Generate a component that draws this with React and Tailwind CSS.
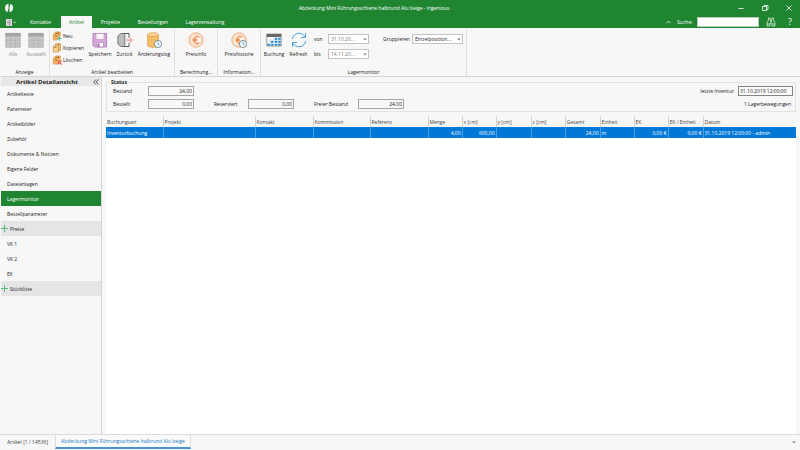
import React, { useState } from "react";

const menuTabs = [
  { name: "Kontakte", width: "w-[41px]" },
  { name: "Artikel", width: "w-[31px]" },
  { name: "Projekte", width: "w-[37px]" },
  { name: "Bestellungen", width: "w-12" },
  { name: "Lagerverwaltung", width: "w-14" },
];

const sections = [
  { name: "Artikeltexte" },
  { name: "Parameter" },
  { name: "Artikelbilder" },
  { name: "Zubehör" },
  { name: "Dokumente & Notizen" },
  { name: "Eigene Felder" },
  { name: "Dateianlagen" },
  { name: "Lagermonitor" },
  { name: "Bestellparameter" },
  { name: "Preise", group: true },
  { name: "VK 1" },
  { name: "VK 2" },
  { name: "EK" },
  { name: "Stückliste", group: true },
];

const columns = [
  { name: "Buchungsart", width: "w-[57px]", value: "Inventurbuchung" },
  { name: "Projekt", width: "w-[92px]", value: "" },
  { name: "Kontakt", width: "w-[58px]", value: "" },
  { name: "Kommission", width: "w-[57px]", value: "" },
  { name: "Referenz", width: "w-[58px]", value: "" },
  { name: "Menge", width: "w-[34px]", value: "4,00", right: true },
  { name: "x [cm]", width: "w-[34px]", value: "600,00", right: true },
  { name: "y [cm]", width: "w-[35px]", value: "" },
  { name: "z [cm]", width: "w-[34px]", value: "" },
  { name: "Gesamt", width: "w-[35px]", value: "24,00", right: true },
  { name: "Einheit", width: "w-[34px]", value: "m" },
  { name: "EK", width: "w-[34px]", value: "0,00 €", right: true },
  { name: "EK / Einheit", width: "w-[35px]", value: "0,00 €", right: true },
  { name: "Datum", width: "w-auto", value: "31.10.2019 12:00:00 - admin" },
];

const LogoIcon = () => (
  <svg viewBox="0 0 10 10" className="size-2.5">
    <path d="M4.500 .8C2 1 1 3 1 5s.8 3.500 2.300 4.200L4.500 6Z" fill="#f3faf4" />
    <path d="M5.500 9.200C8 9 9 7 9 5s-.8-3.500-2.300-4.200L5.500 4Z" fill="#f3faf4" />
  </svg>
);

const GridIcon = () => (
  <svg viewBox="0 0 16 16" className="size-4">
    <path d="M.5 1h15v14.500H.5z" fill="#c6c6c6" />
    <path d="M.5 1h15v3.500H.5z" fill="#a5a5a5" />
    <path
      d="M.5 4.500h15M.5 8.200h15M.5 11.900h15M5.500 4.500v11M10.500 4.500v11"
      stroke="#b3b3b3"
      strokeWidth=".7"
    />
    <path d="M.8 1.300h14.400v13.900H.8z" fill="none" stroke="#aaa" strokeWidth=".6" />
  </svg>
);

const SaveIcon = () => (
  <svg viewBox="0 0 16 16" className="size-4">
    <path d="M1 1.500h13.500V15H2.500L1 13.500z" fill="#d8aadb" stroke="#b07bb5" strokeWidth=".9" />
    <path d="M4 1.500h8v6H4z" fill="#faf6fa" stroke="#b98abd" strokeWidth=".6" />
    <path d="M4.500 10.500h7V15h-7z" fill="#fff" stroke="#b07bb5" strokeWidth=".6" />
    <path d="M5.500 11.500h2V15h-2z" fill="#a46aaa" />
  </svg>
);

const BackIcon = () => (
  <svg viewBox="0 0 16 16" className="size-4">
    <path d="M6 1.500h6v4M12 11v3.500H6" fill="none" stroke="#454545" strokeWidth=".9" />
    <path d="M.8 4l3-2.500h4v13h-4L.8 12z" fill="#bcbcbc" stroke="#666" strokeWidth=".8" />
    <path d="M9 8h6M12.700 5.500L15.200 8l-2.500 2.500" fill="none" stroke="#e8706a" strokeWidth=".9" />
  </svg>
);

const Clock = () => (
  <>
    <circle cx="12" cy="12" r="3.600" fill="#f5fafc" stroke="#526777" strokeWidth=".7" />
    <path d="M12 9.800v2.400l1.600.9" fill="none" stroke="#287eb5" strokeWidth=".7" />
  </>
);

const LogIcon = () => (
  <svg viewBox="0 0 16 16" className="size-4">
    <path
      d="M1.500 2.500v10.800C1.500 16 12.500 16 12.500 13.300V2.500"
      fill="#f5bd68"
      stroke="#d99738"
      strokeWidth=".6"
    />
    <ellipse cx="7" cy="2.600" rx="5.500" ry="1.900" fill="#fbd99f" stroke="#d99738" strokeWidth=".7" />
    <Clock />
  </svg>
);

const EuroIcon = ({ clock }) => (
  <svg viewBox="0 0 16 16" className="size-4">
    <circle cx="8" cy="8" r="7.200" fill="#fff1e5" stroke="#f09a5d" strokeWidth=".8" />
    <circle cx="8" cy="8" r="5.600" fill="none" stroke="#f4b386" strokeWidth=".6" />
    <path
      d="M11 5.200C8.500 3.500 6 5 6 8s2.500 4.500 5 2.800M4.500 7.200H9M4.500 8.800H9"
      fill="none"
      stroke="#ed8039"
      strokeWidth="1.100"
    />
    {clock && <Clock />}
  </svg>
);

const BookingIcon = () => (
  <svg viewBox="0 0 16 16" className="size-4">
    <path d="M.8 2h14.400v12H.8z" fill="#fff" stroke="#777" strokeWidth=".7" />
    <path d="M.8 2h14.400v3H.8z" fill="#666" />
    <path d="M.8 8h14.400M.8 11h14.400M4.400 5v9M8 5v9M11.600 5v9" stroke="#b6cad9" strokeWidth=".5" />
    <path
      d="M9 6h2v1.500H9zM12.400 6h2v1.500h-2zM5.200 9h2v1.500h-2zM9 9h2v1.500H9zM12.400 9h2v1.500h-2zM1.600 12h2v1.500h-2zM5.200 12h2v1.500h-2zM9 12h2v1.500H9zM12.400 12h2v1.500h-2z"
      fill="#2384c9"
      stroke="#2384c9"
      strokeWidth=".4"
    />
  </svg>
);

const RefreshIcon = () => (
  <svg viewBox="0 0 16 16" className="size-4">
    <path
      d="M1.300 7A6.800 6.800 0 0 1 14 4.800M14.700 9A6.800 6.800 0 0 1 2 11.200M14.500 1v4.500H10M1.500 15v-4.500H6"
      fill="none"
      stroke="#4ba3d8"
      strokeWidth="1"
    />
  </svg>
);

const SmallIcon = ({ kind }) => (
  <svg viewBox="0 0 10 10" className="size-2.5 shrink-0">
    {kind === "copy" ? (
      <>
        <path d="M3.500 .8h5v6.700h-5z" fill="#f6c473" stroke="#c98a3a" strokeWidth=".7" />
        <path d="M1.200 3h5.300v6H1.200z" fill="#fbd594" stroke="#c98a3a" strokeWidth=".7" />
        <path d="M6 1.500h1.500M2.500 4.500h2" stroke="#7a5a35" strokeWidth=".7" />
      </>
    ) : (
      <>
        <path d="M1.300 3.500L3.500 1h4.700v4L5 9H1.300z" fill="#f5b55f" stroke="#d08f3f" strokeWidth=".7" />
        <path d="M3.500 2.500h2M6.500 1.500v2M3 5h2" stroke="#765026" strokeWidth=".8" />
      </>
    )}
    {kind === "new" && <path d="M7.300 5.200v4.500M5 7.500h4.600" stroke="#4dc08a" strokeWidth="1.100" />}
    {kind === "delete" && <path d="M5.500 5.500l4 4m0-4l-4 4" stroke="#e9564c" strokeWidth="1.100" />}
  </svg>
);

const BinocularsIcon = () => (
  <svg viewBox="0 0 10 10" className="size-2.5">
    <path
      d="M2.500 1h1.700v2.500h1.600V1h1.700v2L9 5.500V9H6V6H4v3H1V5.500L2.500 3z"
      fill="none"
      stroke="#d9efdc"
      strokeWidth=".8"
    />
    <path d="M1 7h3M6 7h3M4 4.500h2" stroke="#d9efdc" strokeWidth=".7" />
  </svg>
);

const Arrow = () => (
  <svg viewBox="0 0 4 3" className="h-[3px] w-1">
    <path d="M0 .5h4L2 2.500z" fill="#888" />
  </svg>
);

const RibbonGroup = ({ title, className, children }) => (
  <section className={`flex flex-col border-r border-[#dedede] ${className}`}>
    <div className="flex flex-1 justify-center">{children}</div>
    <h2 className="truncate text-center leading-2">{title}</h2>
  </section>
);

const RibbonButton = ({ label, className, disabled, children }) => (
  <button
    type="button"
    disabled={disabled}
    className={`flex flex-col items-center gap-[2px] pt-[2px] whitespace-nowrap disabled:text-[#8a8a8a] ${className}`}
  >
    {children}
    <span className="leading-2">{label}</span>
  </button>
);

const SmallButton = ({ label, kind }) => (
  <button type="button" className="flex h-3 items-center gap-px whitespace-nowrap">
    <SmallIcon kind={kind} />
    {label}
  </button>
);

const Dropdown = ({ id, value, className, muted }) => (
  <div className={`relative ${className}`}>
    <select
      id={id}
      className={`block h-2.5 w-full appearance-none truncate border border-[#c3c3c3] bg-white pr-[7px] pl-[2px] leading-2 ${
        muted ? "text-[#777]" : "text-[#222]"
      }`}
    >
      <option>{value}</option>
    </select>
    <span className="pointer-events-none absolute inset-y-0 right-[2px] flex items-center">
      <Arrow />
    </span>
  </div>
);

const StockField = ({ id, label, value, labelWidth }) => (
  <div className="flex items-center">
    <label htmlFor={id} className={`shrink-0 ${labelWidth}`}>
      {label}
    </label>
    <input
      id={id}
      readOnly
      value={value}
      className="h-2.5 w-[46px] border border-[#a5a5a5] bg-[#f8f8f8] px-px text-right"
    />
  </div>
);

const TitleBar = () => (
  <div className="grid h-4 grid-cols-[1fr_auto_1fr] items-center">
    <div className="pl-1">
      <LogoIcon />
    </div>
    <h1 className="pr-[52px]">Abdeckung Mini Führungsschiene halbrund Alu beige - ingenious</h1>
    <div className="flex justify-end gap-4 pr-[7px]">
      <button type="button" aria-label="Minimieren">
        <svg viewBox="0 0 8 8" className="size-2">
          <path d="M1.500 4.500h5" stroke="#fff" strokeWidth=".8" />
        </svg>
      </button>
      <button type="button" aria-label="Wiederherstellen">
        <svg viewBox="0 0 8 8" className="size-2">
          <path d="M1.500 2.500h4v4h-4zM3 2.500v-1h4v4H5.500" fill="none" stroke="#fff" strokeWidth=".8" />
        </svg>
      </button>
      <button type="button" aria-label="Schließen">
        <svg viewBox="0 0 8 8" className="size-2">
          <path d="M1.500 1.500l5 5m0-5l-5 5" stroke="#fff" strokeWidth=".8" />
        </svg>
      </button>
    </div>
  </div>
);

const MenuBar = () => {
  const [active, setActive] = useState("Artikel");

  return (
    <div className="flex h-3 items-center">
      <button type="button" aria-label="Menü" className="flex w-5 items-center gap-px pl-1.5">
        <svg viewBox="0 0 6 7" className="h-[7px] w-1.5">
          <path d="M0 0h6v7H0z" fill="#e1d9e2" />
          <path d="M1 2h4M1 3.500h4M1 5h4M3.500 0v7" stroke="#8e7892" strokeWidth=".5" />
        </svg>
        <svg viewBox="0 0 4 3" className="h-[3px] w-[3px]">
          <path d="M0 .5h4L2 2.500z" fill="#c7e2ca" />
        </svg>
      </button>
      <nav className="flex h-full items-center">
        {menuTabs.map((tab) => (
          <button
            key={tab.name}
            type="button"
            onClick={() => setActive(tab.name)}
            className={`h-full whitespace-nowrap ${tab.width} ${
              active === tab.name ? "bg-[#f7f7f7] text-[#1f8531]" : "text-white"
            }`}
          >
            {tab.name}
          </button>
        ))}
      </nav>
      <div className="ml-auto flex items-center pr-2">
        <svg viewBox="0 0 6 4" className="mr-1.5 h-1 w-[5px]">
          <path d="M.5 3.500L3 1l2.500 2.500" fill="none" stroke="#fff" strokeWidth="1" />
        </svg>
        <label htmlFor="suche" className="w-5">
          Suche:
        </label>
        <input id="suche" className="h-2.5 w-[62px] border border-[#b9c9bb] bg-white px-px text-[#333]" />
        <button type="button" aria-label="Suchen" className="ml-[7px]">
          <BinocularsIcon />
        </button>
        <button type="button" className="ml-3 text-[9px] leading-2">
          ?
        </button>
      </div>
    </div>
  );
};

const Ribbon = () => (
  <div className="flex h-[49px] border-b border-[#d5d5d5] pt-[2px]">
    <RibbonGroup title="Anzeige" className="w-[50px]">
      <RibbonButton label="Alle" className="w-[23px]" disabled>
        <GridIcon />
      </RibbonButton>
      <RibbonButton label="Auswahl" className="w-[23px]" disabled>
        <GridIcon />
      </RibbonButton>
    </RibbonGroup>
    <RibbonGroup title="Artikel bearbeiten" className="w-[125px]">
      <div className="flex w-[35px] flex-col">
        <SmallButton label="Neu" kind="new" />
        <SmallButton label="Kopieren" kind="copy" />
        <SmallButton label="Löschen" kind="delete" />
      </div>
      <RibbonButton label="Speichern" className="w-[26px]">
        <SaveIcon />
      </RibbonButton>
      <RibbonButton label="Zurück" className="w-[23px]">
        <BackIcon />
      </RibbonButton>
      <RibbonButton label="Änderungslog" className="w-[36px]">
        <LogIcon />
      </RibbonButton>
    </RibbonGroup>
    <RibbonGroup title="Berechnung..." className="w-[43px]">
      <RibbonButton label="Preisinfo">
        <EuroIcon />
      </RibbonButton>
    </RibbonGroup>
    <RibbonGroup title="Information..." className="w-[43px]">
      <RibbonButton label="Preishistorie">
        <EuroIcon clock />
      </RibbonButton>
    </RibbonGroup>
    <RibbonGroup title="Lagermonitor" className="w-[206px]">
      <RibbonButton label="Buchung" className="w-[26px]">
        <BookingIcon />
      </RibbonButton>
      <RibbonButton label="Refresh" className="w-[23px]">
        <RefreshIcon />
      </RibbonButton>
      <div className="flex flex-1 justify-between pt-1 pr-[3px] pl-1">
        <div className="flex flex-col gap-[5px]">
          <div className="flex items-center">
            <label htmlFor="von" className="w-3.5">
              von
            </label>
            <Dropdown id="von" value="31.10.20..." className="w-[41px]" muted />
          </div>
          <div className="flex items-center">
            <label htmlFor="bis" className="w-3.5">
              bis
            </label>
            <Dropdown id="bis" value="14.11.20..." className="w-[41px]" muted />
          </div>
        </div>
        <div className="flex h-2.5 items-center">
          <label htmlFor="gruppieren" className="w-[29px]">
            Gruppieren
          </label>
          <Dropdown id="gruppieren" value="Einzelposition..." className="w-[51px]" />
        </div>
      </div>
    </RibbonGroup>
  </div>
);

const Sidebar = () => {
  const [selected, setSelected] = useState("Lagermonitor");

  return (
    <aside className="w-[102px] shrink-0 border-r border-[#d5d5d5] pl-px">
      <div className="flex h-[9px] items-center bg-[#e8e8e8] pr-[2px]">
        <h2 className="flex-1 text-center text-[6px] font-bold">Artikel Detailansicht</h2>
        <button type="button" aria-label="Einklappen">
          <svg viewBox="0 0 6 6" className="size-1.5">
            <path d="M3 .5L.7 3 3 5.500M5.500 .5L3.200 3l2.300 2.500" fill="none" stroke="#333" strokeWidth=".8" />
          </svg>
        </button>
      </div>
      <ul>
        {sections.map((item) => (
          <li key={item.name}>
            <button
              type="button"
              onClick={() => setSelected(item.name)}
              className={`flex h-[15px] w-full items-center ${
                selected === item.name ? "bg-[#1f8531] text-white" : item.group ? "bg-[#e5e5e5]" : ""
              } ${item.group ? "gap-[2px]" : "pl-1.5"}`}
            >
              {item.group && (
                <svg viewBox="0 0 7 7" className="size-[7px]">
                  <path d="M3.500 0v7M0 3.500h7" stroke="#43b66c" strokeWidth=".9" />
                </svg>
              )}
              {item.name}
            </button>
          </li>
        ))}
      </ul>
    </aside>
  );
};

const StatusBox = () => (
  <fieldset className="flex justify-between border border-[#e3e3e3] pr-[2px] pb-[2px] pl-1.5">
    <legend className="-ml-[3px] px-px leading-2 font-bold">Status</legend>
    <div className="flex flex-col gap-[3px]">
      <StockField id="bestand" label="Bestand" value="24,00" labelWidth="w-[35px]" />
      <div className="flex gap-5">
        <StockField id="bestellt" label="Bestellt" value="0,00" labelWidth="w-[35px]" />
        <StockField id="reserviert" label="Reserviert" value="0,00" labelWidth="w-[34px]" />
        <StockField id="frei" label="Freier Bestand" value="24,00" labelWidth="w-11" />
      </div>
    </div>
    <div className="flex flex-col items-end gap-[3px]">
      <div className="flex items-center gap-1">
        <label htmlFor="inventur">letzte Inventur</label>
        <input
          id="inventur"
          readOnly
          value="31.10.2019 12:00:00"
          className="h-2.5 w-[55px] border border-[#858585] bg-[#fcfcfc] px-px"
        />
      </div>
      <p className="pr-[2px] leading-2.5">1 Lagerbewegungen</p>
    </div>
  </fieldset>
);

const BookingTable = () => (
  <div className="mt-1 flex-1 bg-white">
    <table className="w-full table-fixed border-collapse">
      <thead>
        <tr className="h-[11px] bg-[#f7f7f7] text-[#444]">
          {columns.map((col) => (
            <th
              key={col.name}
              className={`border-r border-[#d2d2d2] p-0 pl-px text-left font-normal whitespace-nowrap last:border-r-0 ${col.width}`}
            >
              {col.name}
            </th>
          ))}
        </tr>
      </thead>
      <tbody>
        <tr className="h-[11px] bg-[#0078d7] text-white">
          {columns.map((col) => (
            <td
              key={col.name}
              className={`border-r border-[#4a9fe2] px-px py-0 whitespace-nowrap last:border-r-0 ${
                col.right ? "text-right" : "text-left"
              }`}
            >
              {col.value}
            </td>
          ))}
        </tr>
      </tbody>
    </table>
  </div>
);

const DocumentTabs = () => (
  <footer className="flex h-4 shrink-0 border-t border-[#dcdcdc]">
    <button type="button" className="h-3.5 w-[55px] text-[#444]">
      Artikel [1 / 14536]
    </button>
    <button
      type="button"
      className="h-3.5 border-x border-b-2 border-x-[#dcdcdc] border-b-[#4a90d5] bg-[#fafafa] px-[5px] text-[#2478c4]"
    >
      Abdeckung Mini Führungsschiene halbrund Alu beige
    </button>
    <button type="button" aria-label="Fenster" className="mr-1 ml-auto">
      <Arrow />
    </button>
  </footer>
);

const App = () => {
  return (
    <div className="flex min-h-screen flex-col bg-[#f7f7f7] font-['Open_Sans','Noto_Sans',sans-serif] text-[5px] leading-2 text-[#222]">
      <header>
        <div className="bg-[#1f8531] text-white">
          <TitleBar />
          <MenuBar />
        </div>
        <Ribbon />
      </header>
      <div className="flex flex-1">
        <Sidebar />
        <main className="flex min-w-0 flex-1 flex-col pt-px pr-1 pl-1">
          <StatusBox />
          <BookingTable />
        </main>
      </div>
      <DocumentTabs />
    </div>
  );
};

export default App;
